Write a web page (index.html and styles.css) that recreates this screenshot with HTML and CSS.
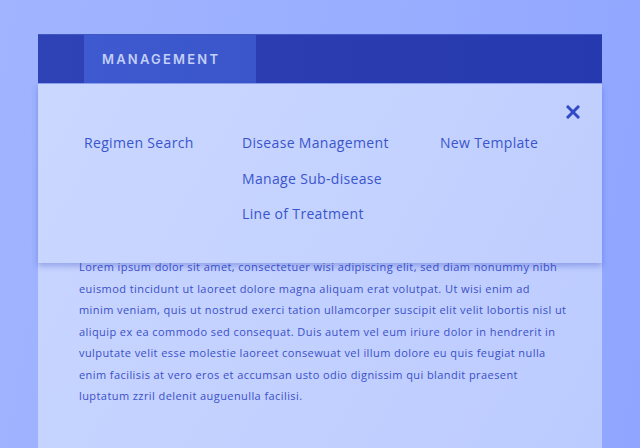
FILE: index.html
```html
<!DOCTYPE html>
<html>
<head>
<meta charset="utf-8">
<link rel="stylesheet" href="styles.css">
</head>
<body>
<div class="card">
  <div class="topbar">
    <div class="tab">MANAGEMENT</div>
  </div>
  <div class="content">
    <p class="lorem">Lorem ipsum dolor sit amet, consectetuer wisi adipiscing elit, sed diam nonummy nibh<br>
euismod tincidunt ut laoreet dolore magna aliquam erat volutpat. Ut wisi enim ad<br>
minim veniam, quis ut nostrud exerci tation ullamcorper suscipit elit velit lobortis nisl ut<br>
aliquip ex ea commodo sed consequat. Duis autem vel eum iriure dolor in hendrerit in<br>
vulputate velit esse molestie laoreet consewuat vel illum dolore eu quis feugiat nulla<br>
enim facilisis at vero eros et accumsan usto odio dignissim qui blandit praesent<br>
luptatum zzril delenit auguenulla facilisi.</p>
  </div>
  <div class="panel">
    <button class="close" aria-label="Close">
      <svg width="14" height="14" viewBox="0 0 14 14"><path d="M2 2 L12 12 M12 2 L2 12" stroke="#3149c4" stroke-width="3" stroke-linecap="square"/></svg>
    </button>
    <div class="cols">
      <ul class="col col1"><li>Regimen Search</li></ul>
      <ul class="col col2"><li>Disease Management</li><li>Manage Sub-disease</li><li>Line of Treatment</li></ul>
      <ul class="col col3"><li>New Template</li></ul>
    </div>
  </div>
</div>
</body>
</html>
```
FILE: styles.css
```css
html, body {
  margin: 0;
  height: 100%;
}
body {
  background: linear-gradient(100deg, #a0b4ff 0%, #98adff 60%, #8fa5ff 100%);
  overflow: hidden;
}
.card {
  position: relative;
  margin: 34px 38px 0;
  height: 414px;
  background: linear-gradient(120deg, #c9d6ff 0%, #c2d0ff 60%, #bccbff 100%);
}
.topbar {
  background: linear-gradient(90deg, #2f43b6 0%, #2a3cb0 50%, #2739ae 100%);
  border-top: 1px solid #3f56c4;
  display: flex;
  padding-left: 46px;
  border-bottom: 1px solid #8ea2f0;
  box-sizing: border-box;
  height: 50px;
}
.tab {
  width: 172px;
  background: linear-gradient(90deg, #3f5ad0 0%, #3a56ca 100%);
  color: #c3cff8;
  font-family: Inter, "Noto Sans", sans-serif;
  font-weight: 600;
  font-size: 13px;
  letter-spacing: 2.2px;
  display: flex;
  align-items: center;
  padding-left: 18px;
  box-sizing: border-box;
}
.content {
  padding: 172px 41px 0;
}
.lorem {
  margin: 0;
  white-space: nowrap;
  font-family: "Open Sans", sans-serif;
  font-size: 11px;
  letter-spacing: 0.42px;
  line-height: 21.5px;
  color: #3a50c8;
}
.panel {
  position: absolute;
  top: 50px;
  left: 0;
  right: 0;
  height: 179px;
  background: linear-gradient(120deg, #cad7ff 0%, #c4d2ff 60%, #bfcdff 100%);
  box-shadow: 0 3px 6px rgba(50, 70, 190, 0.35);
}
.close {
  position: absolute;
  top: 21px;
  right: 22px;
  border: 0;
  background: none;
  padding: 0;
  width: 14px;
  height: 14px;
  cursor: pointer;
}
.close svg { display: block; }
.cols {
  display: flex;
  padding: 50px 0 0 46px;
}
.col {
  list-style: none;
  margin: 0;
  padding: 0;
  font-family: "Open Sans", sans-serif;
  font-size: 14px;
  letter-spacing: 0.33px;
  line-height: 18px;
  color: #3a55cc;
}
.col li { margin-bottom: 17.5px; }
.col1 { width: 158px; }
.col2 { width: 198px; }
```
